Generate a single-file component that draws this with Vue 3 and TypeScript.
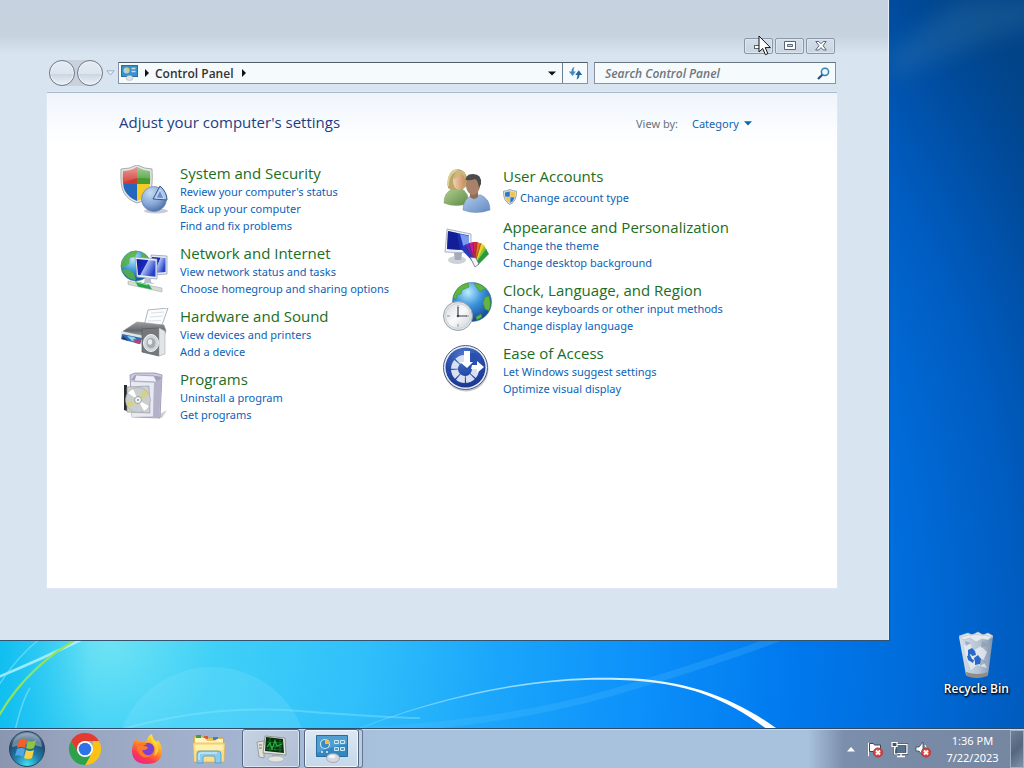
<script setup lang="ts">
import { ref } from 'vue'

interface Category {
  icon: string
  title: string
  links: string[]
  shield?: boolean
}

const leftColumn: Category[] = [
  { icon: 'security', title: 'System and Security', links: ["Review your computer's status", 'Back up your computer', 'Find and fix problems'] },
  { icon: 'network', title: 'Network and Internet', links: ['View network status and tasks', 'Choose homegroup and sharing options'] },
  { icon: 'hardware', title: 'Hardware and Sound', links: ['View devices and printers', 'Add a device'] },
  { icon: 'programs', title: 'Programs', links: ['Uninstall a program', 'Get programs'] },
]

const rightColumn: Category[] = [
  { icon: 'users', title: 'User Accounts', links: ['Change account type'], shield: true },
  { icon: 'appearance', title: 'Appearance and Personalization', links: ['Change the theme', 'Change desktop background'] },
  { icon: 'clock', title: 'Clock, Language, and Region', links: ['Change keyboards or other input methods', 'Change display language'] },
  { icon: 'ease', title: 'Ease of Access', links: ['Let Windows suggest settings', 'Optimize visual display'] },
]

const columns = [leftColumn, rightColumn]
const search = ref('')
const view = ref('Category')
</script>

<template>
  <div class="screen">
    <svg class="wallpaper" viewBox="0 0 1024 768" preserveAspectRatio="none" aria-hidden="true">
      <defs>
        <radialGradient id="sky" gradientUnits="userSpaceOnUse" cx="110" cy="640" r="1070">
          <stop offset="0" stop-color="#6ee3f4" />
          <stop offset=".1" stop-color="#3fd0f7" />
          <stop offset=".24" stop-color="#30bffa" />
          <stop offset=".36" stop-color="#1ba6fb" />
          <stop offset=".5" stop-color="#0c90fa" />
          <stop offset=".64" stop-color="#0079ee" />
          <stop offset=".75" stop-color="#006cda" />
          <stop offset=".85" stop-color="#005cc0" />
          <stop offset=".95" stop-color="#004a9a" />
          <stop offset="1" stop-color="#024488" />
        </radialGradient>
        <linearGradient id="edge" x1="0" y1="0" x2="1" y2="0">
          <stop offset="0" stop-color="#00b9ee" stop-opacity=".75" />
          <stop offset="1" stop-color="#00b9ee" stop-opacity="0" />
        </linearGradient>
        <linearGradient id="arc" gradientUnits="userSpaceOnUse" x1="380" y1="0" x2="700" y2="0">
          <stop offset="0" stop-color="#7fdcff" stop-opacity=".6" />
          <stop offset="1" stop-color="#fff" />
        </linearGradient>
        <filter id="soft" x="-20%" y="-50%" width="140%" height="200%"><feGaussianBlur stdDeviation="10" /></filter>
      </defs>
      <rect width="1024" height="768" fill="url(#sky)" />
      <rect y="600" width="90" height="168" fill="url(#edge)" />
      <circle cx="212" cy="764" r="97" fill="#a5efff" opacity=".16" />
      <path d="M120 730Q210 704 300 711T420 718" fill="none" stroke="#8ce8ff" stroke-width="2" opacity=".4" />
      <path d="M340 732Q500 725 610 693T800 630" fill="none" stroke="#60c6ff" stroke-width="7" opacity=".2" />
      <path d="M340 736C450 690 545 676 620 678C690 679 738 701 776 728L768 730C730 701 690 682 620 680C545 677 450 692 340 736Z" fill="url(#arc)" />
      <path d="M-4 678Q35 662 85 638" fill="none" stroke="#c3f7ff" stroke-width="2.5" opacity=".75" />
      <path d="M-4 690Q14 659 42 637M14 735Q22 700 30 688" fill="none" stroke="#8fe6ff" stroke-width="1.5" opacity=".55" />
      <path d="M-4 721Q25 667 82 636" fill="none" stroke="#8fe45c" stroke-width="2.2" />
      <path d="M890 50L960 0H1040V20L890 80Z" fill="#4a8ab0" opacity=".22" filter="url(#soft)" />
    </svg>

    <main class="desktop">
      <section class="window" aria-label="Control Panel">
        <div class="caption">
          <button type="button" aria-label="Minimize"><svg width="12" height="10" viewBox="0 0 12 10"><rect x="1.500" y="4.500" width="9" height="3" fill="#fff" stroke="#5b6476" /></svg></button>
          <button type="button" aria-label="Maximize"><svg width="12" height="10" viewBox="0 0 12 10"><path d="M.5.5h11v8H.5zM3.500 3.500v2h5v-2z" fill="#fff" fill-rule="evenodd" stroke="#5b6476" /></svg></button>
          <button type="button" aria-label="Close"><svg width="12" height="10" viewBox="0 0 12 10"><path d="M.8.5h3L6 2.800 8.200.5h3L8 4.700l3.300 4.300h-3L6 6.600 3.700 9h-3L4 4.700z" fill="#fff" stroke="#5b6476" /></svg></button>
        </div>
        <div class="nav">
          <div class="travel">
            <button type="button" aria-label="Back"></button>
            <button type="button" aria-label="Forward"></button>
          </div>
          <svg class="recent" width="9" height="6" viewBox="0 0 9 6"><path d="M.8.8h7.400L4.500 5z" fill="#eaf0f7" stroke="#a3afbe" /></svg>
          <div class="address">
            <svg class="address-icon" width="17" height="16" viewBox="0 0 17 16">
              <rect x=".5" y=".5" width="16" height="11" fill="#3992c8" stroke="#2b6f9f" />
              <circle cx="5.500" cy="5.500" r="3" fill="#a9d3e8" /><path d="M5.500 5.500v-3a3 3 0 0 1 3 3z" fill="#efc53c" />
              <path d="M10.500 3.500h4M10.500 6.500h4" stroke="#c5e4f2" stroke-width="1.500" />
              <ellipse cx="8.500" cy="13" rx="3.500" ry="2.500" fill="#dfe3e8" stroke="#a0a9b3" stroke-width=".5" />
            </svg>
            <svg class="tri" width="4" height="8" viewBox="0 0 4 8"><path d="M0 0l4 4-4 4z" fill="#111" /></svg>
            <button type="button" class="crumb">Control Panel</button>
            <svg class="tri" width="4" height="8" viewBox="0 0 4 8"><path d="M0 0l4 4-4 4z" fill="#111" /></svg>
            <button type="button" class="history" aria-label="Previous locations"><svg width="8" height="5" viewBox="0 0 8 5"><path d="M0 .5h8L4 4.500z" fill="#111" /></svg></button>
            <button type="button" class="refresh" aria-label="Refresh">
              <svg width="15" height="14" viewBox="0 0 15 14"><path d="M6.500 1Q3.500 1.500 3.500 5.500H.8L4.600 10l3.200-4.500H5.600Q5.300 3 6.500 1z" fill="#4389c4" /><path d="M8.500 13.500q3-1 3-4.500h2.700L10.800 4.200 7.200 9h2.200q.3 2.500-.9 4.500z" fill="#24679f" /></svg>
            </button>
          </div>
          <div class="search">
            <input v-model="search" type="search" aria-label="Search Control Panel" placeholder="Search Control Panel" />
            <svg width="13" height="13" viewBox="0 0 13 13"><path d="M5.800 7.200L1 12" stroke="#2d4f7f" stroke-width="2.200" /><circle cx="8" cy="4.800" r="3.600" fill="#eaf8fc" stroke="#3480ae" stroke-width="1.500" /></svg>
          </div>
        </div>

        <div class="panel">
          <header class="panel-head">
            <h1>Adjust your computer's settings</h1>
            <div class="view">
              <label for="view-by">View by:</label>
              <span class="picker">
                <select id="view-by" v-model="view"><option>Category</option></select>
                <svg width="8" height="5" viewBox="0 0 8 5"><path d="M0 .3h8L4 4.500z" fill="#1264b0" /></svg>
              </span>
            </div>
          </header>
          <div class="columns">
            <div v-for="(column, c) in columns" :key="c" class="column">
              <article v-for="item in column" :key="item.title" class="category">
                <svg class="cat-icon" width="50" height="50" viewBox="0 0 50 50" aria-hidden="true">
                  <g v-if="item.icon === 'security'">
                    <defs>
                      <clipPath id="shield-clip"><path d="M17 2Q24 6 30 6Q31 21 28 27Q24 34 17 36Q9 33 5 26Q2 20 3 6Q11 6 17 2z" /></clipPath>
                      <radialGradient id="orb" cx=".35" cy=".25" r=".85"><stop offset="0" stop-color="#c8dcf3" /><stop offset=".55" stop-color="#86a7d6" /><stop offset="1" stop-color="#40649f" /></radialGradient>
                      <linearGradient id="gloss" x1="0" y1="0" x2="0" y2="1"><stop offset="0" stop-color="#fff" stop-opacity=".55" /><stop offset="1" stop-color="#fff" stop-opacity="0" /></linearGradient>
                    </defs>
                    <path d="M17 0Q25 4 32 4Q33 22 30 28Q26 36 17 38Q8 35 4 28Q0 21 1 4Q10 4 17 0z" fill="#e4e6e5" stroke="#94999a" stroke-width=".8" />
                    <g clip-path="url(#shield-clip)">
                      <path d="M0 0h17v19H0z" fill="#d23a31" /><path d="M17 0h17v19H17z" fill="#469b31" />
                      <path d="M0 19h17v20H0z" fill="#2467bd" /><path d="M17 19h17v20H17z" fill="#f3cd26" />
                      <path d="M0 0h34v15Q17 9 0 20z" fill="url(#gloss)" />
                    </g>
                    <ellipse cx="36" cy="46" rx="12" ry="2.500" fill="#5c6c88" opacity=".35" />
                    <circle cx="34" cy="34" r="12.500" fill="url(#orb)" stroke="#6782ad" stroke-width=".7" />
                    <path d="M40 21L33 34l14 1Q47 27 40 21z" fill="#aac4ea" stroke="#34588e" />
                    <path d="M40 25l-4 8 8 .5z" fill="#6a90cc" stroke="#f4f8ff" stroke-width=".6" />
                  </g>

                  <g v-else-if="item.icon === 'network'">
                    <defs>
                      <radialGradient id="globe" cx=".4" cy=".25" r=".8"><stop offset="0" stop-color="#bdeafa" /><stop offset=".5" stop-color="#3d97d8" /><stop offset="1" stop-color="#104b91" /></radialGradient>
                      <linearGradient id="crt" x1="0" y1="0" x2="1" y2=".5"><stop offset="0" stop-color="#1019a0" /><stop offset=".5" stop-color="#1a2cb8" /><stop offset=".54" stop-color="#a8bdf5" /><stop offset="1" stop-color="#2741c8" /></linearGradient>
                    </defs>
                    <g transform="translate(0 3)">
                      <circle cx="16" cy="18" r="15" fill="url(#globe)" stroke="#3d7c9f" stroke-width=".6" />
                      <path d="M3 11Q9 1 18 3l-3 6-5 1-1 6-7 4Q1 15 3 11zM2 22q8-2 12 4l2 6q-9 0-14-10zM21 4q6 2 8 7l-8-2z" fill="#58b23e" opacity=".85" />
                      <path d="M31 7l16 1v18l-14 1z" fill="#e6ebf4" stroke="#8793ac" stroke-width=".7" /><path d="M32 9l13.500 1v14L34 25z" fill="url(#crt)" />
                      <path d="M15 9l22 2v20L17 29z" fill="#eef1f7" stroke="#8793ac" stroke-width=".7" /><path d="M16.500 11l19 1.700v16L18 27z" fill="url(#crt)" />
                      <path d="M25 30l6 1v3l4 2-11-1z" fill="#b9c0cc" />
                      <path d="M8 33l34 7v4L8 36.500z" fill="#d5dbd5" stroke="#9da59e" stroke-width=".5" />
                      <path d="M15 33l14 3.500 3 5-14-3z" fill="#28a248" /><path d="M16 34l12 3" stroke="#95e4a2" />
                    </g>
                  </g>

                  <g v-else-if="item.icon === 'hardware'">
                    <defs>
                      <linearGradient id="metal" x1="0" y1="0" x2="0" y2="1"><stop offset="0" stop-color="#9b9ea1" /><stop offset=".45" stop-color="#66696d" /><stop offset="1" stop-color="#cccfd2" /></linearGradient>
                    </defs>
                    <path d="M28 2l20-2-7 20-17-2z" fill="#fbfcfd" stroke="#9da3ab" stroke-width=".8" /><path d="M31 5l13-1M30 9l13-1M28 13l13-.5" stroke="#dbe0e6" />
                    <path d="M3 23l14-9 27 3 2 6-4 10-38-4z" fill="url(#metal)" stroke="#8d9195" stroke-width=".6" />
                    <path d="M1 23l23 5-1 9L2 32z" fill="#e2e4e6" />
                    <path d="M2 26l20 4-2 6L1 31z" fill="#2d6fb4" /><path d="M7 28l5 5 7 1-5-5z" fill="#8dd8e8" /><path d="M3 28l6 5-7-2z" fill="#26366e" /><path d="M13 31l8 1-1 4-5-1z" fill="#a6447c" />
                    <path d="M22 21l17-1v28l-17-4z" fill="#76797c" stroke="#55585b" stroke-width=".7" /><path d="M39 20l6 3v23l-6 2z" fill="#e2e4e7" stroke="#a9adb2" stroke-width=".6" />
                    <ellipse cx="31" cy="35" rx="7.500" ry="8.500" fill="#cfd6da" stroke="#f1f3f4" /><ellipse cx="31" cy="35" rx="4.500" ry="5.300" fill="#a5adb3" /><ellipse cx="30" cy="34" rx="2.200" ry="2.700" fill="#e9edef" />
                  </g>

                  <g v-else-if="item.icon === 'programs'">
                    <path d="M36 45l11-6-5 8z" fill="#606676" opacity=".3" />
                    <path d="M10 4l5-2h20l7 2-2 43-28-1z" fill="#cbc9dc" stroke="#8785a0" stroke-width=".7" />
                    <path d="M15 4l22 1 4 1v4l-30-1z" fill="#9f9ebd" /><path d="M16 4l18 1 3 6-23-1z" fill="#f0f0fa" stroke="#8e8da8" stroke-width=".6" />
                    <path d="M11 11l23 1-1 33-21 1z" fill="#e9e9f3" /><path d="M34 12l8-5-3 39-6 1z" fill="#b4b2c9" />
                    <path d="M4 14h3v26l-3-1z" fill="#272a30" /><path d="M7 16l22-1 1 27-23-1z" fill="#ccd2d3" stroke="#949b9e" stroke-width=".7" />
                    <circle cx="18" cy="29" r="12.500" fill="#c9cece" stroke="#a3a8aa" stroke-width=".6" />
                    <path d="M18 29L8 22a12 12 0 0 1 5-4zM18 29l11 6a12 12 0 0 1-5 5z" fill="#fff" /><path d="M18 29l6-10a12 12 0 0 1 5 5zM18 29L9 37l-3-6z" fill="#d4d283" />
                    <circle cx="18" cy="29" r="3.500" fill="#f4f5f5" stroke="#9aa1a4" /><circle cx="18" cy="29" r="1" fill="#888f92" />
                  </g>

                  <g v-else-if="item.icon === 'users'">
                    <defs>
                      <linearGradient id="green-shirt" x1="0" y1="0" x2="1" y2="1"><stop offset="0" stop-color="#b2d092" /><stop offset="1" stop-color="#5c8a42" /></linearGradient>
                      <linearGradient id="blue-shirt" x1="0" y1="0" x2="1" y2="1"><stop offset="0" stop-color="#b3cdec" /><stop offset="1" stop-color="#6289c2" /></linearGradient>
                      <linearGradient id="skin" x1="0" y1="0" x2="1" y2="0"><stop offset="0" stop-color="#f3d0ae" /><stop offset="1" stop-color="#c78f63" /></linearGradient>
                    </defs>
                    <path d="M1 35Q1 24 10 21h9q7 4 6 14Q14 40 1 35z" fill="url(#green-shirt)" stroke="#74945c" stroke-width=".5" />
                    <path d="M5 20Q3 2 15 1q11 2 9 17l-4 3-12 1z" fill="#bba868" /><path d="M5 18Q5 4 15 2" fill="none" stroke="#ddd09a" stroke-width="2" />
                    <ellipse cx="16" cy="13" rx="6" ry="9" fill="url(#skin)" /><path d="M9 12q6-2 8-7 4 1 5 6V4l-8-2z" fill="#cbb97c" />
                    <path d="M20 42q0-12 10-15h8q9 4 9 15-14 5-27 0z" fill="url(#blue-shirt)" stroke="#6384b1" stroke-width=".5" />
                    <path d="M27 23h8v6q-4 4-8 0z" fill="#916d58" /><ellipse cx="30" cy="17" rx="7" ry="10" fill="#a98069" />
                    <path d="M23 15Q21 6 30 6q9 0 8 10l-2 4q-1-8-4-9-5 2-9 1z" fill="#4b4a4c" />
                  </g>

                  <g v-else-if="item.icon === 'appearance'">
                    <g transform="translate(2 9)">
                      <ellipse cx="12" cy="32" rx="9" ry="4" fill="#cdd1d8" /><path d="M9 25h8l-1 7h-6z" fill="#a3abba" />
                      <path d="M2 1l24 5v19L0 24z" fill="#eef1f7" stroke="#8d97ab" stroke-width=".7" /><path d="M3 3l21 4.500v15L2 21z" fill="#1b2fb4" /><path d="M3 3l9 2 3 17-13-1z" fill="#0c1480" opacity=".6" /><path d="M15 6l9 2v14l-5-1z" fill="#7b9bed" />
                      <g transform="translate(30 36)">
                        <path d="M0 0L-13-14l1-4 4-2z" fill="#2a39c4" /><path d="M0 0L-10-19l5-2z" fill="#6a2ac0" /><path d="M0 0L-6-21l5-1z" fill="#c51d93" /><path d="M0 0L-2-22l5 0z" fill="#df2739" /><path d="M0 0L2-22l5 2z" fill="#ee7425" /><path d="M0 0L6-21l4 3z" fill="#f5cf2b" /><path d="M0 0L9-18l3 4z" fill="#83c933" /><path d="M0 0L11-15l3 5L3 1z" fill="#2a9b42" />
                        <path d="M0-1L-6-21M0-1L-2-22M0-1L2-22M0-1L6-21M0-1L-10-19" stroke="#33272f" stroke-width=".6" opacity=".7" />
                        <path d="M-5-7L1-6 4 0 0 3z" fill="#f5f5f7" stroke="#565c66" stroke-width=".7" />
                      </g>
                    </g>
                  </g>

                  <g v-else-if="item.icon === 'clock'">
                    <defs>
                      <radialGradient id="earth" cx=".4" cy=".25" r=".8"><stop offset="0" stop-color="#b9edff" /><stop offset=".45" stop-color="#3b93dc" /><stop offset="1" stop-color="#103f8b" /></radialGradient>
                      <linearGradient id="dial" x1="0" y1="0" x2="1" y2="1"><stop offset="0" stop-color="#d8dde1" /><stop offset=".5" stop-color="#f9fafb" /><stop offset="1" stop-color="#cdd3d7" /></linearGradient>
                    </defs>
                    <circle cx="29" cy="20" r="19.500" fill="url(#earth)" stroke="#406f98" stroke-width=".6" />
                    <path d="M10 16Q13 3 25 1l1 4-7 3-1 4-4 1-1 4zM31 1q8 1 12 6l-4 1-2 2-3-4zM42 15l4-1q3 8 0 15l-4-2-2-6zM33 35l5-3 1 3-5 3z" fill="#62b53e" stroke="#3b8a35" stroke-width=".5" />
                    <circle cx="15" cy="34" r="14.500" fill="#dfe3e5" stroke="#9aa2a9" /><circle cx="15" cy="34" r="12.300" fill="url(#dial)" stroke="#c5ccd1" stroke-width=".7" />
                    <path d="M15 23v3M15 42v3M4 34h3M23 34h3" stroke="#8d979f" /><path d="M15 25v9h9" fill="none" stroke="#3e464d" stroke-width="1.200" /><circle cx="15" cy="34" r="1.300" fill="#3e464d" />
                  </g>

                  <g v-else>
                    <defs><radialGradient id="access" cx=".45" cy=".2" r=".9"><stop offset="0" stop-color="#4f77c8" /><stop offset=".55" stop-color="#2549a8" /><stop offset="1" stop-color="#19328b" /></radialGradient></defs>
                    <circle cx="23" cy="24" r="22.500" fill="#8c9099" opacity=".5" /><circle cx="22.500" cy="22.500" r="22" fill="#e9edf4" stroke="#4e5c80" /><circle cx="22.500" cy="22.500" r="20" fill="url(#access)" />
                    <circle cx="22" cy="24" r="10.500" fill="none" stroke="#d9e0f0" stroke-width="7" stroke-dasharray="7.200 1.047" />
                    <path d="M22 24V8h11l8 16z" fill="#2850b0" />
                    <path d="M21 6h6v11h3l-6 6-7-6h4z" fill="#fff" /><path d="M29 20h5v-4l7 6-7 6v-4h-6z" fill="#fff" />
                  </g>
                </svg>
                <div class="cat-text">
                  <h2><a href="#">{{ item.title }}</a></h2>
                  <a v-for="link in item.links" :key="link" href="#" class="task" :class="{ elevated: item.shield }">
                    <svg v-if="item.shield" width="14" height="16" viewBox="0 0 14 16">
                      <path d="M7 .5Q10 2 13.500 2.200q.4 10-6.500 13.300Q.1 12.200.5 2.200 4 2 7 .5z" fill="#dfe3e6" stroke="#87909a" stroke-width=".8" />
                      <path d="M6.800 2.300v5.500H2.200L2 3.500Q4.500 3.400 6.800 2.300zM7.300 8.200h4.300q-1 4-4.300 5.800z" fill="#2c78c8" /><path d="M7.300 2.300v5.500h4.500l.2-4.300Q9.500 3.400 7.300 2.300zM6.800 8.200H2.400q1 4 4.400 5.800z" fill="#f1c443" />
                    </svg>{{ link }}
                  </a>
                </div>
              </article>
            </div>
          </div>
        </div>

        <svg class="pointer" width="14" height="21" viewBox="0 0 14 21" aria-hidden="true"><path d="M1 1v16l3.700-3.500 2.700 6.200 2.500-1.100-2.700-6h5.200z" fill="#fff" stroke="#111" /></svg>
      </section>

      <aside class="icons">
        <button type="button" class="desk-icon">
          <svg width="40" height="48" viewBox="0 0 40 48" aria-hidden="true">
            <defs><linearGradient id="bin" x1="0" y1="0" x2="1" y2="0"><stop offset="0" stop-color="#e0e6ed" /><stop offset=".6" stop-color="#bdc7d3" /><stop offset="1" stop-color="#8496ac" /></linearGradient></defs>
            <path d="M3 6h34l-5 38q-12 5-22 0z" fill="url(#bin)" opacity=".95" />
            <path d="M10 41q12 4 22 0l-.5 4q-11 4-21 0z" fill="#8e8d88" />
            <path d="M3 5l9-3 4 2 6-3 5 3 5-2 5 3-5 4-6-1-6 3-6-4-6 2z" fill="#e6eaee" stroke="#b4bcc5" stroke-width=".7" />
            <path d="M5 6q14-5 32 0" fill="none" stroke="#c5ced8" />
            <path d="M8 14l6-2 3 8 8-5 6 6-4 9 4 7-10-3-6 5-5-12z" fill="#eceff3" opacity=".75" /><path d="M26 10l6 4-7 3zM24 27l7 4-7 4zM9 10l6 2-5 3z" fill="#8c9cae" opacity=".7" />
            <path d="M12 19l4-2 3 3 1 4-4 1-1-2-3 2zM11 25l3-1 2 4 2 1-1 3-5-3zM18 27l4-3 3 4-1 5-5 1v-3z" fill="#2768c9" />
          </svg>
          <span>Recycle Bin</span>
        </button>
      </aside>
    </main>

    <footer class="taskbar">
      <button type="button" class="start" aria-label="Start">
        <svg width="36" height="36" viewBox="0 0 36 36">
          <defs>
            <radialGradient id="start-orb" cx=".5" cy=".95" r=".95"><stop offset="0" stop-color="#3ee1f4" /><stop offset=".4" stop-color="#1e7da8" /><stop offset=".75" stop-color="#1f4b70" /><stop offset="1" stop-color="#7594ae" /></radialGradient>
          </defs>
          <circle cx="18" cy="18" r="17.500" fill="url(#start-orb)" stroke="#28435f" /><path d="M3 16Q4 3 18 2q14 1 15 14-15-5-30 0z" fill="#fff" opacity=".32" />
          <path d="M10 9q4-3 8 0l-2 8q-4-2-8 0z" fill="#ee622a" /><path d="M19 10q4 2 8-1l-2 8q-4 2-8 0z" fill="#8fc63e" /><path d="M8 18q4-2 8 0l-2 8q-4-3-8-1z" fill="#55a4e4" /><path d="M17 19q4 2 8 0l-2 8q-4 2-8 0z" fill="#fccf3e" />
        </svg>
      </button>
      <div class="apps">
        <button type="button" aria-label="Google Chrome">
          <svg width="32" height="32" viewBox="0 0 32 32">
            <path d="M22.930 20L16 32l-6.930-12z" fill="#2da14c" /><path d="M16 32l6.930-12L24 8h5.860A16 16 0 0 1 16 32z" fill="#fbc116" /><path d="M2.140 8A16 16 0 0 1 29.860 8H16q-5 0-6.930 12z" fill="#e33b2e" /><path d="M2.140 8l6.930 12L16 24h4.600L16 32A16 16 0 0 1 2.140 8z" fill="#2da14c" />
            <circle cx="16" cy="16" r="8" fill="#fff" /><circle cx="16" cy="16" r="6.300" fill="#2d73e8" />
          </svg>
        </button>
        <button type="button" aria-label="Firefox">
          <svg width="32" height="32" viewBox="0 0 32 32">
            <defs><linearGradient id="fox" x1=".8" y1=".1" x2=".3" y2="1"><stop offset="0" stop-color="#ffe53b" /><stop offset=".45" stop-color="#ff8a25" /><stop offset=".75" stop-color="#fb3b4f" /><stop offset="1" stop-color="#e9268a" /></linearGradient></defs>
            <path d="M5 5l3 4 4-1 3 2q1-7 6-9 0 5 5 8l1-2q5 7 4 13-2 11-15 11Q2 31 1 19 1 11 5 5z" fill="url(#fox)" />
            <circle cx="17" cy="16" r="6.200" fill="#7a42d1" /><path d="M8 10q5-2 8 1l-4 2q5 0 5 2-3 3-6 2 2 7 10 5-9 6-14-3-2-5 1-9z" fill="#ff792c" /><path d="M21 1q0 5 5 8 4 10-3 14 3-6 0-11-4-5-2-11z" fill="#ffdb39" opacity=".8" />
          </svg>
        </button>
        <button type="button" aria-label="Windows Explorer">
          <svg width="34" height="30" viewBox="0 0 34 30">
            <path d="M2 2h8l2 2h19v24H2z" fill="#ebc562" stroke="#c69b3a" stroke-width=".6" /><path d="M4 1h5v3H4z" fill="#3b9f50" /><path d="M12 2h4v3h-4z" fill="#db583c" /><path d="M21 3h5v3h-5z" fill="#3b82c8" />
            <path d="M3 4h10l2 3h8l2-2h6v8H3z" fill="#fff5bf" /><path d="M1 9h32l-1 19H2z" fill="#f9df8a" stroke="#d9af4a" stroke-width=".6" /><path d="M3 11h28v5H3z" fill="#fff0b0" />
            <path d="M5 29v-9q0-3 3-3h18q3 0 3 3v9h-6v-5q0-2-2-2h-8q-2 0-2 2v5z" fill="#8ecaec" stroke="#4b99c9" stroke-width=".8" /><path d="M7 26v-5q0-2 2-2h16" fill="none" stroke="#e0f6ff" />
          </svg>
        </button>
        <button type="button" class="open" aria-label="System Monitor">
          <svg width="31" height="28" viewBox="0 0 31 28">
            <path d="M1 7l7-1v17l-5-1z" fill="#dfe0d8" stroke="#85877f" stroke-width=".7" /><path d="M3 10h3M3 13h3" stroke="#777" />
            <path d="M9 1l20 2 1 17-23-2z" fill="#e5e6df" stroke="#777a72" stroke-width=".7" /><path d="M10 2l17 2 1 14-19-2z" fill="#06320e" />
            <path d="M11 7l16 1M11 11l15 1M10 14l16 1M14 3v13M19 4v12M24 5v12" stroke="#1b8934" stroke-width=".7" /><path d="M11 12l3-4 2 6 3-8 2 5 5-2" fill="none" stroke="#32b443" stroke-width="1.100" />
            <path d="M16 20h7v4h-7z" fill="#abada7" /><ellipse cx="20" cy="24" rx="8" ry="3" fill="#e4e5e1" stroke="#999c96" stroke-width=".5" />
          </svg>
        </button>
        <button type="button" class="open active" aria-label="Control Panel">
          <svg width="32" height="28" viewBox="0 0 32 28">
            <path d="M.5.500h31v21H.5z" fill="#3587c2" stroke="#286c9f" /><path d="M1 1h30v8Q16 11 1 18z" fill="#6db6e1" opacity=".5" />
            <circle cx="9" cy="9" r="4.500" fill="#388ac4" stroke="#cfe6f2" stroke-width="1.200" /><path d="M9 9V4a5 5 0 0 1 5 5z" fill="#f5bf3d" />
            <path d="M18.500 5.500h4v3h-4zM24.500 5.500h4v3h-4zM18.500 12.500h4v3h-4zM24.500 12.500h4v3h-4z" fill="#519fce" stroke="#cfe8f5" /><path d="M5 17h2M10 17h2" stroke="#e6f5fb" stroke-width="1.500" />
            <ellipse cx="17" cy="23" rx="6.500" ry="4.500" fill="#d5d8dc" stroke="#929aa3" stroke-width=".7" /><ellipse cx="16" cy="21.500" rx="3.500" ry="1.800" fill="#f4f5f6" />
          </svg>
        </button>
      </div>
      <div class="tray">
        <button type="button" aria-label="Show hidden icons"><svg width="8" height="5" viewBox="0 0 8 5"><path d="M4 0l4 4.500H0z" fill="#fff" /></svg></button>
        <button type="button" aria-label="Action Center">
          <svg width="17" height="17" viewBox="0 0 17 17"><path d="M1.500 1v15M2.500 2.500h4l1 1.500h6v8H8l-1-1.500H2.500z" fill="#fff" stroke="#38485b" /><path d="M1.500 1.500v14" stroke="#fff" /><circle cx="11" cy="11.500" r="4.500" fill="#dc4a45" stroke="#b0322f" /><path d="M9 9.500l4 4M13 9.500l-4 4" stroke="#fff" stroke-width="1.800" /></svg>
        </button>
        <button type="button" aria-label="Network">
          <svg width="17" height="17" viewBox="0 0 17 17"><path d="M4 3.500h12v9H4z" fill="#58718b" stroke="#26384b" stroke-width="2.800" /><path d="M4 3.500h12v9H4zM10 13v2.500M6 15.500h8" fill="none" stroke="#fff" stroke-width="1.400" /><path d="M1 1.500h5v4H1zM3.500 6v7h3" fill="#41566c" stroke="#fff" stroke-width="1.200" /></svg>
        </button>
        <button type="button" aria-label="Volume muted">
          <svg width="17" height="17" viewBox="0 0 17 17"><path d="M1 6h3l4-5v14l-4-5H1z" fill="#fff" stroke="#38485b" stroke-width=".8" /><path d="M10 4q2 3 1 6" fill="none" stroke="#fff" /><circle cx="11" cy="11.500" r="4.500" fill="#dc4a45" stroke="#b0322f" /><path d="M9 9.500l4 4M13 9.500l-4 4" stroke="#fff" stroke-width="1.800" /></svg>
        </button>
        <button type="button" class="time"><span>1:36 PM</span><span>7/22/2023</span></button>
      </div>
      <button type="button" class="show-desktop" aria-label="Show desktop"></button>
    </footer>
  </div>
</template>

<style>
html,
body {
  margin: 0;
  height: 100%;
  overflow: hidden;
}
</style>

<style scoped>
.screen {
  position: relative;
  display: flex;
  flex-direction: column;
  height: 100vh;
  font-family: "Open Sans", "Noto Sans", sans-serif;
  font-size: 12px;
  cursor: default;
}
.screen * { box-sizing: border-box; }
button {
  display: flex;
  align-items: center;
  justify-content: center;
  padding: 0;
  border: 0;
  background: none;
  font: inherit;
  color: inherit;
}
svg { display: block; flex: none; }
a { text-decoration: none; color: #0b62b8; }
.wallpaper { position: absolute; inset: 0; width: 100%; height: 100%; }
.desktop { position: relative; flex: 1; min-height: 0; display: flex; }

.window {
  position: relative;
  flex: 1;
  min-width: 0;
  display: flex;
  flex-direction: column;
  gap: 6px;
  margin-bottom: 87px;
  padding: 38px 51px 52px 47px;
  border-right: 1px solid #24507f;
  border-bottom: 1px solid #33536f;
  box-shadow: inset -1px 0 #e6f1f7;
  background: linear-gradient(#c4d1de 0, #c7d4e0 36px, #d8e5f0 54px, #d8e5f1 100%);
}
.caption { display: flex; justify-content: flex-end; gap: 2px; padding-right: 3px; }
.caption button {
  width: 29px;
  height: 16px;
  border: 1px solid #8c98aa;
  border-radius: 2px;
  background: linear-gradient(#d3dee9, #c8d5e3);
  box-shadow: inset 0 0 0 1px #dce6ef;
}
.nav { display: flex; align-items: center; height: 26px; }
.travel { display: flex; gap: 2px; margin-left: 2px; padding: 0; border-radius: 13px; background: #c8d1dd; }
.travel button {
  width: 26px;
  height: 26px;
  border: 1px solid #707986;
  border-radius: 50%;
  background: linear-gradient(#e4ebf3 0, #dce5ee 52%, #cbd6e2 55%, #eaf2f8 100%);
  box-shadow: inset 0 0 0 1px #f0f5f9;
}
.recent { margin: 0 3px; }
.address {
  flex: 1;
  display: flex;
  align-items: center;
  height: 22px;
  border: 1px solid #8793a3;
  border-top-color: #525d6b;
  background: #f5fafd;
}
.address-icon { margin: 0 7px 0 2px; }
.crumb { margin: 0 8px 0 6px; color: #333; font-weight: 600; }
.history { width: 20px; height: 20px; margin-left: auto; }
.refresh { width: 25px; height: 20px; border-left: 1px solid #707d8d; }
.search {
  display: flex;
  align-items: center;
  width: 242px;
  height: 22px;
  margin: 0 2px 0 6px;
  padding: 0 5px 0 10px;
  border: 1px solid #8793a3;
  border-top-color: #687381;
  background: #f5fafd;
}
.search input {
  flex: 1;
  min-width: 0;
  padding: 0;
  border: 0;
  outline: 0;
  background: none;
  font: italic 600 12px "Open Sans", "Noto Sans", sans-serif;
  color: #333;
}
.search input::placeholder { color: #70757c; opacity: 1; }

.panel {
  flex: 1;
  min-height: 0;
  margin-right: 1px;
  padding: 18px 12px 0 72px;
  border-top: 1px solid #a9bace;
  background: linear-gradient(#eff4fb 0, #f8fbfe 26px, #fff 54px);
  box-shadow: 0 0 1px #f5f9fc;
}
.panel-head { display: flex; justify-content: space-between; align-items: center; height: 24px; padding-right: 73px; }
h1 { margin: 0; font-size: 15px; font-weight: 400; line-height: 22px; padding-bottom: 2px; color: #1e3c83; }
.view { display: flex; align-items: center; gap: 14px; color: #6b7179; font-family: "Noto Sans", "Open Sans", sans-serif; font-size: 11px; }
.picker { display: flex; align-items: center; gap: 5px; }
.picker select {
  appearance: none;
  padding: 0;
  border: 0;
  background: none;
  font: inherit;
  color: #1264b0;
}
.columns { display: grid; grid-template-columns: 323px 1fr; padding-top: 28px; }
.column { display: flex; flex-direction: column; gap: 9px; }
.column + .column { padding-top: 3px; }
.category { display: flex; gap: 10px; }
.cat-icon { width: 50px; height: 50px; margin: 2px 0 -13px 1px; }
.cat-text { display: flex; flex-direction: column; align-items: flex-start; }
h2 { margin: 0; font-size: 15px; font-weight: 400; line-height: 20px; }
h2 a { color: #1a6e22; }
.task { font-family: "Noto Sans", "Open Sans", sans-serif; font-size: 11px; line-height: 17px; }
.task.elevated { display: flex; align-items: center; gap: 3px; height: 22px; }

.pointer { position: absolute; left: calc(100% - 131px); top: 35px; }

.icons { display: flex; flex-direction: column; justify-content: flex-end; align-items: flex-end; width: 134px; padding: 0 15px 31px 0; }
.desk-icon {
  flex-direction: column;
  gap: 1px;
  color: #fff;
  font-weight: 600;
  line-height: 17px;
  text-shadow: 1px 1px 2px #000, 0 1px 2px #000;
}

.taskbar {
  position: relative;
  display: flex;
  align-items: stretch;
  height: 40px;
  border-top: 1px solid #2f4a67;
  box-shadow: inset 0 1px #c9dcec;
  background: linear-gradient(90deg, #8a96b0 0, #97a3bd 60px, #a2b1cd 200px, #a8c1dd 380px, #a8c1dd calc(100% - 216px), #7b8eab calc(100% - 180px), #75869f 100%);
}
.start { width: 56px; padding: 0 3px 0 0; }
.apps { display: flex; gap: 4px; }
.apps button { width: 58px; margin-top: 0; }
.apps .open {
  border: 1px solid #56667f;
  border-radius: 3px;
  box-shadow: inset 0 0 0 1px #d9e5f1;
  background: linear-gradient(120deg, #c7d2e3, #b0bed5);
}
.apps .active {
  width: 55px;
  background: linear-gradient(#dce8f4, #c5d7ea);
  box-shadow: inset 0 0 0 1px #f0f6fb, 4px 0 0 -1px #bacde1, 4px 0 0 0 #637791;
}
.tray { display: flex; align-items: center; margin-left: auto; padding-top: 1px; color: #fff; }
.tray button { width: 24px; height: 36px; }
.tray .time { flex-direction: column; width: 75px; font-family: "Noto Sans", "Open Sans", sans-serif; font-size: 11px; line-height: 17px; }
.show-desktop {
  width: 14px;
  margin-top: 1px;
  border: 1px solid #9fb1c6;
  background: linear-gradient(135deg, #6f8097, #55667e 50%, #7f92ab);
}
</style>
